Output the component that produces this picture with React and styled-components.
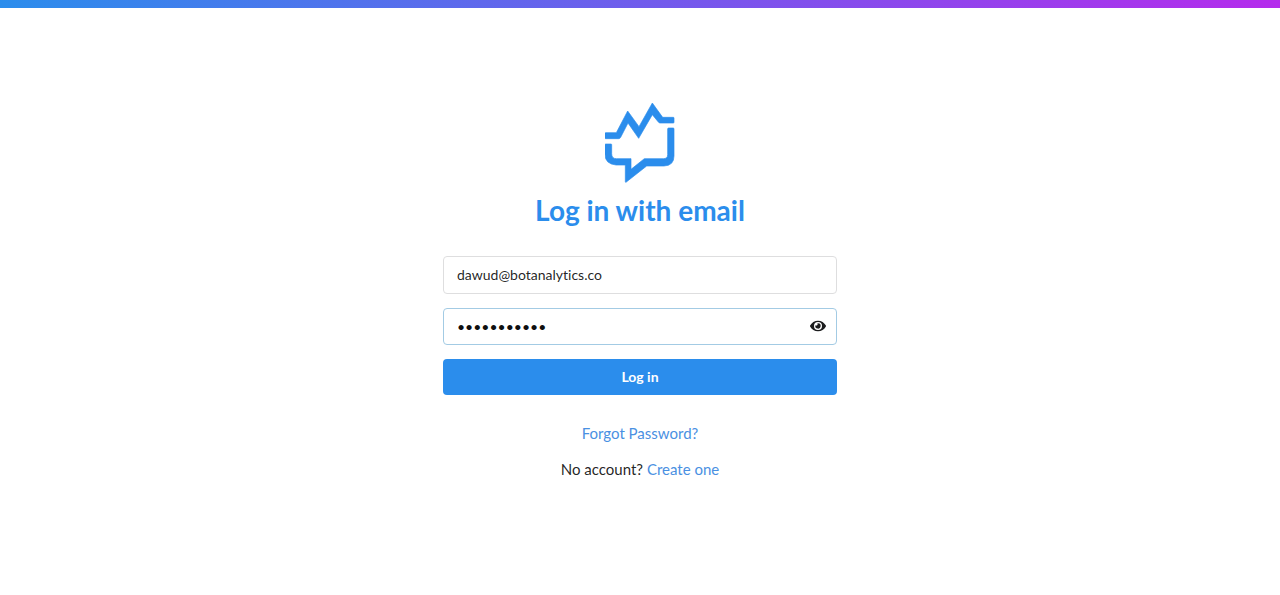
import React, { useState } from "react";
import styled, { createGlobalStyle } from "styled-components";
import { FaEye } from "react-icons/fa";

const GlobalStyle = createGlobalStyle`
  *, *::before, *::after { box-sizing: border-box; }
  body {
    margin: 0;
    background: #fff;
    color: rgba(0, 0, 0, 0.87);
    font-family: Lato, "Liberation Sans", sans-serif;
    font-size: 14px;
    font-variant-ligatures: none;
  }
`;

const TopBar = styled.div`
  height: 8px;
  background: linear-gradient(90deg, #2b8dec, #b52bec);
`;

const Page = styled.main`
  display: flex;
  flex-direction: column;
  align-items: center;
  padding: 94px 16px 48px;
`;

const Logo = styled.svg`
  display: block;
  width: 70px;
  height: 81px;
  fill: #2b8dec;
  stroke: #2b8dec;
  stroke-width: 2;
  stroke-linejoin: round;
`;

const Title = styled.h1`
  margin: 10px 0 28px;
  color: #2b8dec;
  font-size: 28px;
  font-weight: 700;
  line-height: 35px;
`;

const Form = styled.form`
  display: flex;
  flex-direction: column;
  gap: 14px;
  width: 100%;
  max-width: 394px;
`;

const Field = styled.div`
  position: relative;
  display: flex;
`;

const Input = styled.input`
  width: 100%;
  height: ${(p) => (p.$active ? 37 : 38)}px;
  padding: 0 ${(p) => (p.$active ? 40 : 13)}px 1px 13px;
  border: 1px solid ${(p) => (p.$active ? "#a3cbe4" : "#dededf")};
  border-radius: 4px;
  outline: none;
  background: #fff;
  color: ${(p) => (p.$active ? "rgba(0, 0, 0, 0.95)" : "rgba(0, 0, 0, 0.87)")};
  font-family: inherit;
  font-size: 14px;
  font-variant-ligatures: none;
`;

const RevealButton = styled.button`
  position: absolute;
  top: 0;
  right: 0;
  display: flex;
  align-items: center;
  justify-content: center;
  width: 38px;
  height: 36px;
  padding: 0;
  border: 0;
  background: none;
  color: #1b1c1d;
  cursor: pointer;
`;

const SubmitButton = styled.button`
  height: 36px;
  padding: 0 0 2px;
  border: 0;
  border-radius: 4px;
  background: #2b8dec;
  color: #fff;
  font-family: inherit;
  font-size: 14px;
  font-weight: 700;
  cursor: pointer;
`;

const Links = styled.div`
  display: flex;
  flex-direction: column;
  align-items: center;
  gap: 12px;
  margin-top: 26px;
  font-size: 15px;
  line-height: 24px;
`;

const Line = styled.p`
  margin: 0;
`;

const Link = styled.a`
  color: #4a90e2;
  text-decoration: none;
`;

export default function App() {
  const [email, setEmail] = useState("dawud@botanalytics.co");
  const [password, setPassword] = useState("botanalytic");
  const [visible, setVisible] = useState(false);

  return (
    <>
      <GlobalStyle />
      <TopBar />
      <Page>
        <Logo viewBox="30 21 210 243" aria-hidden="true">
          <path d="M32 113H64L98 48L132 95L172 24L203 67H235Q237 67 237 69V82Q237 84 235 84H195Q192 84 190 81L172 59L131 130L99 84L77 127Q75 131 71 131H32Q30 131 30 129V115Q30 113 32 113Z" />
          <path d="M32 147H48Q50 147 50 149V176Q50 191 64 191H108V223L148 191H205Q218 191 218 179V102Q218 99 221 99H235Q237 99 237 102V183Q237 212 207 213H155L94 261Q91 263 91 260V210H63Q30 207 30 178V149Q30 147 32 147Z" />
        </Logo>
        <Title>Log in with email</Title>
        <Form onSubmit={(e) => e.preventDefault()}>
          <Field>
            <Input
              type="email"
              aria-label="Email"
              value={email}
              onChange={(e) => setEmail(e.target.value)}
            />
          </Field>
          <Field>
            <Input
              $active
              type={visible ? "text" : "password"}
              aria-label="Password"
              value={password}
              onChange={(e) => setPassword(e.target.value)}
            />
            <RevealButton
              type="button"
              aria-label="Show password"
              onClick={() => setVisible(!visible)}
            >
              <FaEye size={16} />
            </RevealButton>
          </Field>
          <SubmitButton type="submit">Log in</SubmitButton>
        </Form>
        <Links>
          <Link href="#forgot">Forgot Password?</Link>
          <Line>
            No account? <Link href="#create">Create one</Link>
          </Line>
        </Links>
      </Page>
    </>
  );
}
